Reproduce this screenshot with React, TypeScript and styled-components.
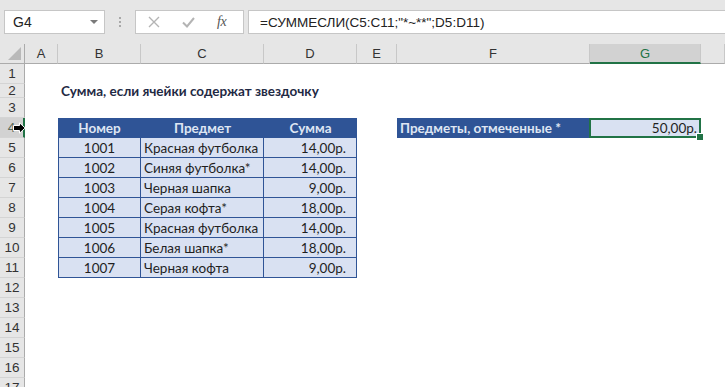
import React from "react";
import styled, { createGlobalStyle, css } from "styled-components";

const Global = createGlobalStyle`
  html, body { margin: 0; padding: 0; background: #ffffff; }
  body { width: 725px; height: 387px; overflow: hidden; font-family: "Lato", "Liberation Sans", sans-serif; }
  * { box-sizing: border-box; }
`;

const Page = styled.div`
  position: relative;
  width: 725px;
  height: 387px;
  overflow: hidden;
  background: #fff;
`;

/* ---------- Formula bar ---------- */
const Toolbar = styled.div`
  display: flex;
  align-items: center;
  height: 44px;
  padding: 10px 0 10px 4px;
  background: #e6e6e6;
`;

const NameBox = styled.div`
  display: flex;
  align-items: center;
  justify-content: space-between;
  width: 101px;
  height: 24px;
  padding: 0 6px 0 8px;
  background: #fff;
  border: 1px solid #c6c6c6;
  font-family: "Liberation Sans", sans-serif;
  font-size: 14px;
  color: #222;
`;

const Caret = styled.span`
  width: 0;
  height: 0;
  border-left: 4px solid transparent;
  border-right: 4px solid transparent;
  border-top: 4px solid #7a7a7a;
`;

const Grip = styled.div`
  display: flex;
  flex-direction: column;
  gap: 2px;
  margin: 0 14px 0 14px;
`;

const GripDot = styled.span`
  width: 2px;
  height: 2px;
  background: #a8a8a8;
`;

const ButtonGroup = styled.div`
  display: flex;
  align-items: center;
  width: 109px;
  height: 24px;
  padding: 0 0 0 12px;
  gap: 22px;
  background: #fff;
  border: 1px solid #c6c6c6;
`;

const FxLabel = styled.span`
  font-family: "Liberation Serif", serif;
  font-style: italic;
  font-size: 14px;
  color: #555;
  letter-spacing: -0.5px;
`;

const FormulaInput = styled.div`
  flex: 1;
  height: 24px;
  margin-left: 4px;
  display: flex;
  align-items: center;
  padding-left: 11px;
  background: #fff;
  border: 1px solid #c6c6c6;
  border-right: none;
  font-family: "Liberation Sans", sans-serif;
  font-size: 13.5px;
  color: #222;
`;

/* ---------- Sheet grid ---------- */
const COLS = "25px 33px 83px 123px 93px 40px 193px 111px 24px";

const Sheet = styled.div`
  display: grid;
  grid-template-columns: ${COLS};
  grid-auto-rows: 20px;
`;

const Corner = styled.div`
  position: relative;
  height: 20px;
  background: #e6e6e6;
  border-right: 1px solid #ababab;
  border-bottom: 1px solid #ababab;
`;

const CornerTriangle = styled.span`
  position: absolute;
  right: 3px;
  bottom: 3px;
  width: 0;
  height: 0;
  border-left: 13px solid transparent;
  border-bottom: 13px solid #b9b9b9;
`;

const ColHeader = styled.div<{ $active?: boolean }>`
  display: flex;
  align-items: center;
  justify-content: center;
  height: 20px;
  background: #e6e6e6;
  border-right: 1px solid #c8c8c8;
  border-bottom: 1px solid #ababab;
  font-family: "Liberation Sans", sans-serif;
  font-size: 13px;
  color: #333;
  ${(p) =>
    p.$active &&
    css`
      background: #d2d2d2;
      color: #217346;
      border-bottom: 2px solid #217346;
    `}
`;

const RowHeader = styled.div<{ $active?: boolean }>`
  display: flex;
  align-items: center;
  justify-content: center;
  background: #e6e6e6;
  border-right: 1px solid #ababab;
  border-bottom: 1px solid #d4d4d4;
  font-family: "Liberation Sans", sans-serif;
  font-size: 13.5px;
  color: #333;
  overflow: hidden;
  ${(p) =>
    p.$active &&
    css`
      background: #d2d2d2;
      color: #5a6a5a;
      border-right: 2px solid #217346;
    `}
`;

type CellKind = "title" | "head" | "body" | "label" | "result";

const Cell = styled.div<{
  $kind: CellKind;
  $align?: "left" | "center" | "right";
  $first?: boolean;
}>`
  display: flex;
  align-items: center;
  justify-content: ${(p) =>
    p.$align === "right" ? "flex-end" : p.$align === "center" ? "center" : "flex-start"};
  white-space: nowrap;
  font-size: 13.5px;
  color: #1f1f1f;
  position: relative;
  min-width: 0;
  ${(p) =>
    p.$kind === "title" &&
    css`
      font-weight: 700;
      color: #1f2a44;
      padding-left: 3px;
    `}
  ${(p) =>
    p.$kind === "head" &&
    css`
      background: #2f5496;
      color: #dfe6f3;
      font-weight: 700;
    `}
  ${(p) =>
    p.$kind === "body" &&
    css`
      background: #d9e1f2;
      color: #1f1f1f;
      border-right: 1px solid #2f5496;
      border-bottom: 1px solid #2f5496;
      ${p.$first && "border-left: 1px solid #2f5496;"}
    `}
  ${(p) =>
    p.$kind === "label" &&
    css`
      background: #2f5496;
      color: #dfe6f3;
      font-weight: 700;
      padding-left: 3px;
    `}
  ${(p) =>
    p.$kind === "result" &&
    css`
      background: #d9e1f2;
      border: 2px solid #217346;
      padding-right: 2px;
      margin-left: -1px;
    `}
  ${(p) => p.$align === "left" && p.$kind === "body" && "padding-left: 3px;"}
  ${(p) => p.$align === "right" && p.$kind === "body" && "padding-right: 10px;"}
`;

const FillHandle = styled.span`
  position: absolute;
  right: -5px;
  bottom: -5px;
  width: 6px;
  height: 6px;
  background: #217346;
  border: 1px solid #fff;
  box-sizing: content-box;
`;

const CursorArrow = styled.svg`
  position: absolute;
  left: 13px;
  top: 122px;
`;

const Spacer = styled.div``;

const colLetters = ["A", "B", "C", "D", "E", "F", "G", ""];

const items: [string, string, string][] = [
  ["1001", "Красная футболка", "14,00р."],
  ["1002", "Синяя футболка*", "14,00р."],
  ["1003", "Черная шапка", "9,00р."],
  ["1004", "Серая кофта*", "18,00р."],
  ["1005", "Красная футболка", "14,00р."],
  ["1006", "Белая шапка*", "18,00р."],
  ["1007", "Черная кофта", "9,00р."],
];

const ROW_HEIGHTS: Record<number, number> = { 2: 14 };

export default function App() {
  const rows: React.ReactNode[] = [];
  for (let r = 1; r <= 17; r++) {
    const cells: React.ReactNode[] = [];
    cells.push(
      <RowHeader key={`h${r}`} $active={r === 4}>
        {r}
      </RowHeader>
    );
    if (r === 2) {
      cells.push(<Spacer key="a" />);
      cells.push(
        <Cell key="b" $kind="title" style={{ gridColumn: "span 7" }}>
          Сумма, если ячейки содержат звездочку
        </Cell>
      );
    } else if (r === 4) {
      cells.push(<Spacer key="a" />);
      cells.push(<Cell key="b" $kind="head" $align="center">Номер</Cell>);
      cells.push(<Cell key="c" $kind="head" $align="center">Предмет</Cell>);
      cells.push(<Cell key="d" $kind="head" $align="center">Сумма</Cell>);
      cells.push(<Spacer key="e" />);
      cells.push(<Cell key="f" $kind="label" $align="left">Предметы, отмеченные *</Cell>);
      cells.push(
        <Cell key="g" $kind="result" $align="right">
          50,00р.
          <FillHandle />
        </Cell>
      );
      cells.push(<Spacer key="h" />);
    } else if (r >= 5 && r <= 11) {
      const [id, name, sum] = items[r - 5];
      cells.push(<Spacer key="a" />);
      cells.push(<Cell key="b" $kind="body" $align="center" $first>{id}</Cell>);
      cells.push(<Cell key="c" $kind="body" $align="left">{name}</Cell>);
      cells.push(<Cell key="d" $kind="body" $align="right">{sum}</Cell>);
      cells.push(<Spacer key="e" style={{ gridColumn: "span 4" }} />);
    } else {
      cells.push(<Spacer key="rest" style={{ gridColumn: "span 8" }} />);
    }
    rows.push(<React.Fragment key={r}>{cells}</React.Fragment>);
  }

  const rowTemplate = [
    "20px",
    ...Array.from({ length: 17 }, (_, i) => `${ROW_HEIGHTS[i + 1] ?? 20}px`),
  ].join(" ");

  return (
    <Page>
      <Global />
      <Toolbar>
        <NameBox>
          G4
          <Caret />
        </NameBox>
        <Grip>
          <GripDot />
          <GripDot />
          <GripDot />
        </Grip>
        <ButtonGroup>
          <svg width="12" height="12" viewBox="0 0 12 12">
            <path d="M1 1 L11 11 M11 1 L1 11" stroke="#b4b4b4" strokeWidth="1.4" fill="none" />
          </svg>
          <svg width="13" height="12" viewBox="0 0 13 12">
            <path d="M1 6.5 L5 10.5 L12 2" stroke="#b4b4b4" strokeWidth="2" fill="none" />
          </svg>
          <FxLabel>fx</FxLabel>
        </ButtonGroup>
        <FormulaInput>=СУММЕСЛИ(C5:C11;"*~**";D5:D11)</FormulaInput>
      </Toolbar>
      <Sheet style={{ gridTemplateRows: rowTemplate }}>
        <Corner>
          <CornerTriangle />
        </Corner>
        {colLetters.map((c, i) => (
          <ColHeader key={i} $active={c === "G"}>
            {c}
          </ColHeader>
        ))}
        {rows}
      </Sheet>
      <CursorArrow width="13" height="12" viewBox="0 0 13 12">
        <path
          d="M0.5 3.5 H6.5 V0.8 L12.2 6 L6.5 11.2 V8.5 H0.5 Z"
          fill="#000"
          stroke="#fff"
          strokeWidth="1"
        />
      </CursorArrow>
    </Page>
  );
}
